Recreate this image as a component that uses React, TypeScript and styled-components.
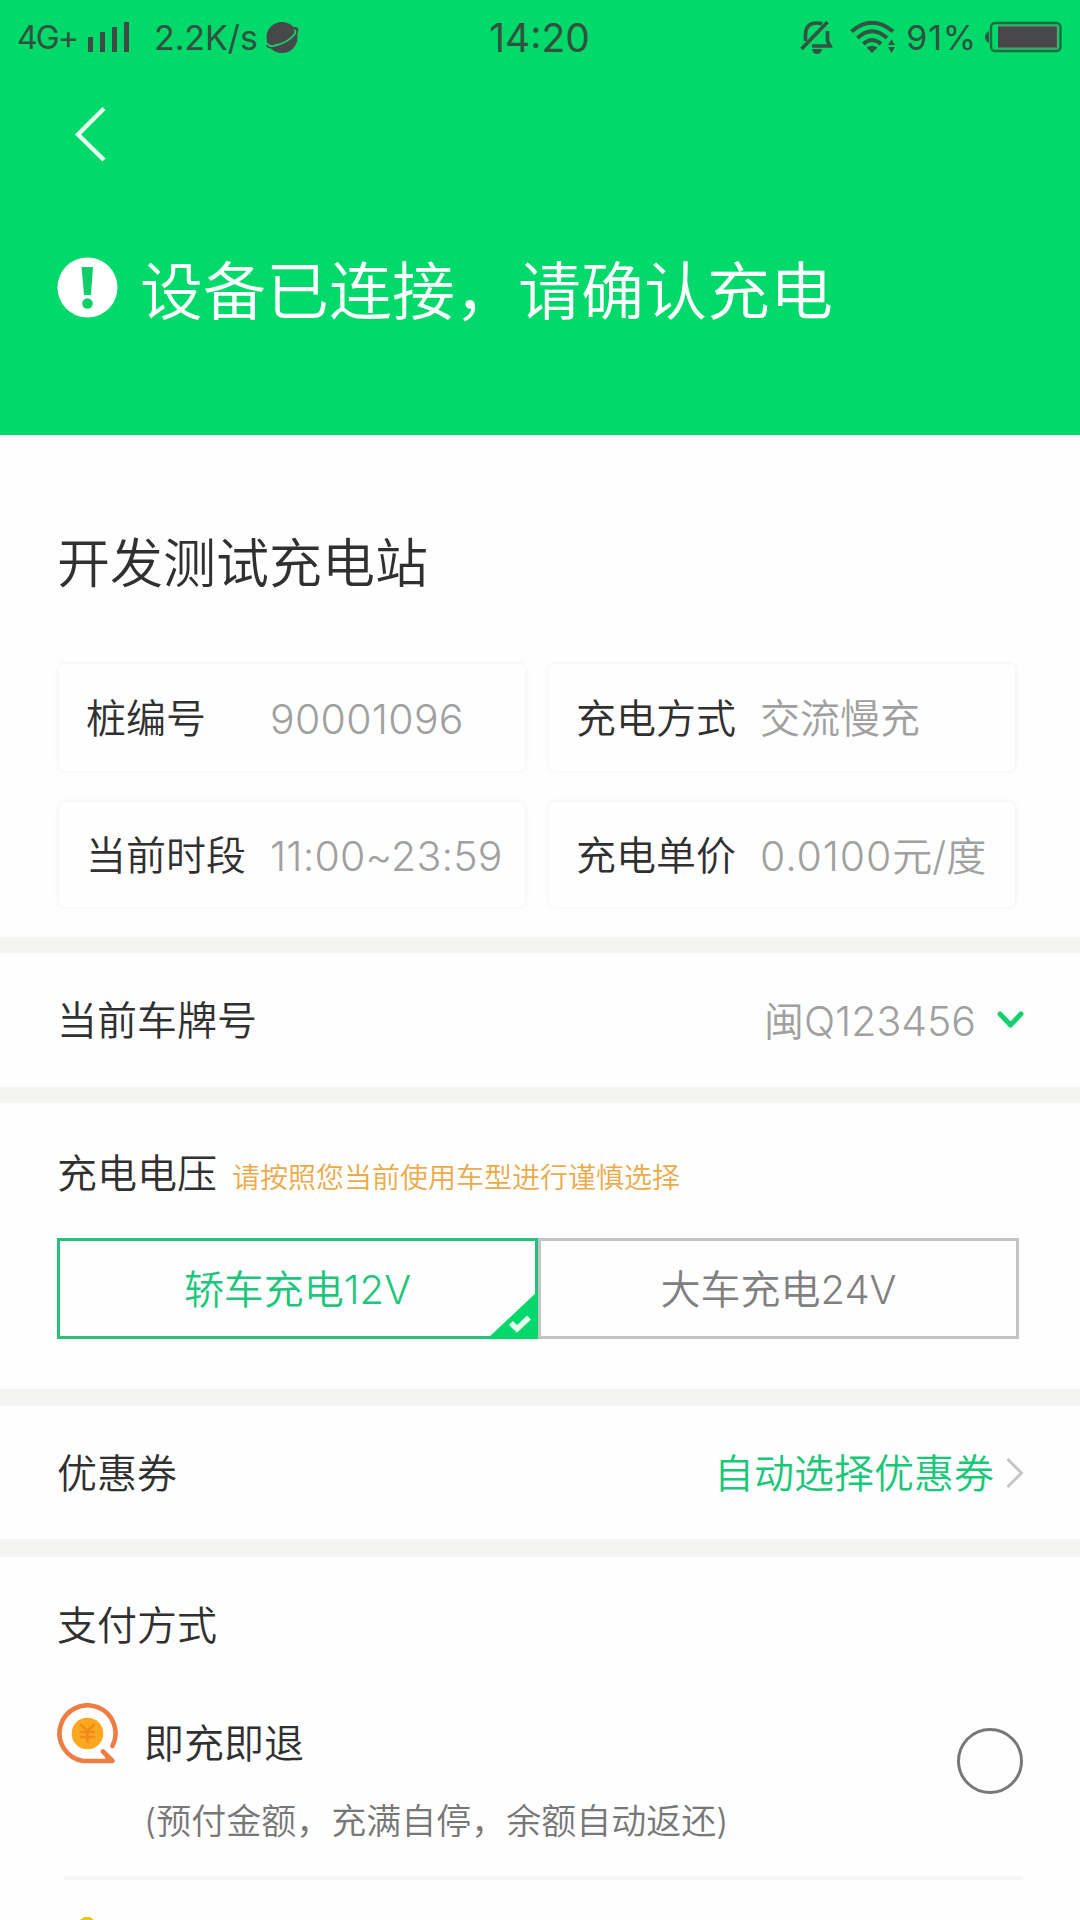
import React from "react";
import styled, { createGlobalStyle } from "styled-components";

const GlobalStyle = createGlobalStyle`
  * { box-sizing: border-box; }
  body {
    margin: 0;
    background: #fefefd;
    font-family: Inter, "Noto Sans CJK SC", sans-serif;
    font-weight: 350;
    color: #303030;
  }
`;

const Screen = styled.div`
  width: 1080px;
  height: 1920px;
  overflow: hidden;
  background: #fefefe;
  display: flex;
  flex-direction: column;
`;

const Header = styled.header`
  height: 435px;
  flex: none;
  background: #01d96a;
  display: flex;
  flex-direction: column;
`;

const StatusBar = styled.div`
  height: 74px;
  padding: 0 18px 0 17px;
  display: grid;
  grid-template-columns: 1fr auto 1fr;
  align-items: center;
  color: #32513f;
  font-weight: 400;
`;

const StatusGroup = styled.div<{ $end?: boolean }>`
  display: flex;
  align-items: center;
  justify-content: ${(p) => (p.$end ? "flex-end" : "flex-start")};
`;

const StatusText = styled.span<{ $size: number; $spacing?: number; $gap?: number }>`
  font-size: ${(p) => p.$size}px;
  letter-spacing: ${(p) => p.$spacing ?? 0}px;
  margin-right: ${(p) => p.$gap ?? 0}px;
  padding-top: 2px;
  line-height: 40px;
  white-space: nowrap;
`;

const Icon = styled.svg<{ $gap?: number }>`
  display: block;
  flex: none;
  margin-right: ${(p) => p.$gap ?? 0}px;
`;

const NavBar = styled.nav`
  height: 118px;
  padding: 32px 0 0 74px;
`;

const Banner = styled.div`
  height: 190px;
  padding-left: 57px;
  display: flex;
  align-items: center;
  gap: 22px;
`;

const BannerText = styled.h1`
  margin: 0;
  padding-top: 7px;
  font-size: 63px;
  line-height: 80px;
  font-weight: 350;
  color: #fff;
  white-space: nowrap;
`;

const Station = styled.section`
  height: 502px;
  flex: none;
  padding: 98px 0 0 59px;
`;

const StationName = styled.h2`
  margin: 0 0 69px -2px;
  font-size: 53px;
  line-height: 62px;
  font-weight: 350;
`;

const InfoGrid = styled.div`
  display: grid;
  grid-template-columns: 466px 466px;
  grid-template-rows: 107px 105px;
  column-gap: 24px;
  row-gap: 31px;
`;

const InfoCard = styled.div`
  display: flex;
  align-items: center;
  padding: 3px 0 0 27px;
  border-radius: 6px;
  box-shadow: 0 0 5px 1px #f3f3f3;
  background: #fefefe;
`;

const Label = styled.span`
  font-size: 40px;
  line-height: 50px;
  white-space: nowrap;
`;

const InfoLabel = styled(Label)`
  width: 184px;
`;

const Value = styled.span`
  font-size: 40px;
  line-height: 50px;
  color: #a0a0a0;
  white-space: nowrap;
`;

const Digits = styled.span<{ $spacing: number }>`
  font-size: 41px;
  font-weight: 300;
  letter-spacing: ${(p) => p.$spacing}px;
`;

const Divider = styled.div<{ $height: number }>`
  height: ${(p) => p.$height}px;
  flex: none;
  background: #f4f4f3;
`;

const Row = styled.section<{ $height: number }>`
  height: ${(p) => p.$height}px;
  flex: none;
  padding: 2px 56px 0 57px;
  display: flex;
  align-items: center;
`;

const RowValue = styled.div<{ $gap: number }>`
  margin-left: auto;
  display: flex;
  align-items: center;
  gap: ${(p) => p.$gap}px;
`;

const CouponText = styled(Label)`
  color: #18c878;
`;

const Voltage = styled.section`
  height: 286px;
  flex: none;
  padding: 46px 61px 0 57px;
`;

const VoltageTitle = styled.div`
  height: 50px;
  display: flex;
  align-items: baseline;
  gap: 15px;
`;

const Hint = styled.span`
  font-size: 28px;
  color: #ecaa48;
  white-space: nowrap;
`;

const Options = styled.div`
  margin-top: 39px;
  height: 101px;
  display: grid;
  grid-template-columns: 481px 481px;
`;

const Option = styled.div<{ $active?: boolean }>`
  position: relative;
  display: flex;
  align-items: center;
  justify-content: center;
  padding-top: 3px;
  font-size: 40px;
  line-height: 50px;
  color: ${(p) => (p.$active ? "#1cc77b" : "#808080")};
  border: 3px solid ${(p) => (p.$active ? "#28bf7b" : "#c3c5c4")};
`;

const Corner = styled.svg`
  position: absolute;
  right: -3px;
  bottom: -3px;
`;

const Payment = styled.section`
  padding: 44px 57px 0 57px;
  display: flex;
  flex-direction: column;
`;

const Method = styled.div`
  margin-top: 52px;
  height: 173px;
  display: flex;
  align-items: flex-start;
`;

const MethodText = styled.div`
  margin: 16px auto 0 26px;
  display: flex;
  flex-direction: column;
  gap: 27px;
`;

const Note = styled.span`
  font-size: 35px;
  line-height: 50px;
  color: #777;
  white-space: nowrap;
`;

const Radio = styled.div`
  width: 66px;
  height: 66px;
  margin-top: 25px;
  border: 3px solid #777;
  border-radius: 50%;
`;

const Line = styled.div`
  height: 4px;
  margin-left: 7px;
  background: #f6f6f5;
`;

const NextMethod = styled.div`
  padding: 37px 0 0 13px;
`;

const infos = [
  { label: "桩编号", digits: "90001096", spacing: 0.3 },
  { label: "充电方式", unit: "交流慢充" },
  { label: "当前时段", digits: "11:00~23:59", spacing: 0.2 },
  { label: "充电单价", digits: "0.0100", unit: "元/度", spacing: 0.9 },
];

const SignalIcon = () => (
  <Icon width="42" height="32" viewBox="0 0 42 32" fill="#3f4b44" $gap={24}>
    <rect x="0" y="16" width="5" height="15" />
    <rect x="12" y="11" width="5" height="20" />
    <rect x="24" y="6" width="5" height="25" />
    <rect x="36" y="1" width="5" height="30" />
  </Icon>
);

const PlanetIcon = () => (
  <Icon width="33" height="33" viewBox="0 0 33 33">
    <circle cx="16" cy="16.5" r="15.5" fill="#48484a" />
    <path d="M28 7 Q33 7 30 13 Q24 23 9 26 Q2 27 1 24" fill="none" stroke="#48484a" strokeWidth="2.5" />
    <path d="M28 9 Q31 10 28 14 Q21 22 9 24.5 Q3 26 2 23" fill="none" stroke="#14d66d" strokeWidth="1.8" />
  </Icon>
);

const MuteIcon = () => (
  <Icon width="34" height="35" viewBox="0 0 34 35" fill="none" stroke="#345340" strokeWidth="3.6" $gap={16}>
    <path d="M5.5 21 V14 Q6 3 17 3 Q20 3 22 4" />
    <path d="M27.5 11 V21 L30 26 H12" />
    <path d="M1.5 29 L27.5 2" />
    <path d="M12 29 H22 Q21 34 17 34 Q13 34 12 29 Z" fill="#345340" stroke="none" />
  </Icon>
);

const WifiIcon = () => (
  <Icon width="46" height="34" viewBox="0 0 46 34" fill="none" stroke="#345340" strokeWidth="4" $gap={10}>
    <path d="M1.5 11.5 Q22 -6 43 11.5" />
    <path d="M7.5 18 Q22 4.5 37 18" />
    <path d="M13.5 24 Q22 16 31 24" />
    <path d="M16.5 27.5 Q22 24 27.5 27.5 L22 33 Z" fill="#345340" stroke="none" />
    <path d="M41.5 19.5 L45 25 H38 Z M38 27 H45 L41.5 33 Z" fill="#345340" stroke="none" />
  </Icon>
);

const BatteryIcon = () => (
  <Icon width="77" height="32" viewBox="0 0 77 32">
    <path d="M4 10 V22 Q0 20 0 16 Q0 12 4 10 Z" fill="#345340" />
    <rect x="6" y="2" width="69.5" height="28" rx="4" fill="none" stroke="#16703c" strokeWidth="2.4" />
    <rect x="13" y="4.5" width="59.5" height="23" fill="#48484a" />
    <path d="M13 4.7 H72.5 V27.3 H13" fill="none" stroke="#5a9c72" strokeWidth="1.4" />
  </Icon>
);

const RefundIcon = () => (
  <Icon width="61" height="61" viewBox="0 0 61 61" fill="none" strokeLinecap="round" strokeLinejoin="round">
    <path d="M55.5 43 A28 28 0 1 0 26 58 H55.5 L46 48.5" stroke="#ee7d41" strokeWidth="4.6" />
    <path d="M47 50 L55 58 H49 Z" fill="#ee7d41" />
    <circle cx="30.5" cy="30.5" r="15.8" fill="#fca81e" />
    <path d="M24 22 L30.5 28 L37 22 M24 29 H37 M24 34 H37 M30.5 28 V39" stroke="#f08a1d" strokeWidth="2.6" />
  </Icon>
);

export default function App() {
  return (
    <Screen>
      <GlobalStyle />
      <Header>
        <StatusBar>
          <StatusGroup>
            <StatusText $size={32} $spacing={-1.9} $gap={11}>4G+</StatusText>
            <SignalIcon />
            <StatusText $size={34} $spacing={-0.1} $gap={8}>2.2K/s</StatusText>
            <PlanetIcon />
          </StatusGroup>
          <StatusText $size={39}>14:20</StatusText>
          <StatusGroup $end>
            <MuteIcon />
            <WifiIcon />
            <StatusText $size={34} $spacing={0.8} $gap={8}>91%</StatusText>
            <BatteryIcon />
          </StatusGroup>
        </StatusBar>
        <NavBar>
          <Icon width="32" height="56" viewBox="0 0 32 56" fill="none" stroke="#e9ffef" strokeWidth="4.4">
            <path d="M30 2.5 L4 28.5 L30 54" />
          </Icon>
        </NavBar>
        <Banner>
          <Icon width="61" height="61" viewBox="0 0 61 61">
            <circle cx="30.5" cy="30.5" r="30" fill="#fff" />
            <path d="M24.5 10 H36 L34 38 H27 Z" fill="#10cf6b" />
            <circle cx="30.5" cy="46.5" r="5.3" fill="#10cf6b" />
          </Icon>
          <BannerText>设备已连接，请确认充电</BannerText>
        </Banner>
      </Header>

      <Station>
        <StationName>开发测试充电站</StationName>
        <InfoGrid>
          {infos.map((info) => (
            <InfoCard key={info.label}>
              <InfoLabel>{info.label}</InfoLabel>
              <Value>
                {info.digits && <Digits $spacing={info.spacing ?? 0}>{info.digits}</Digits>}
                {info.unit}
              </Value>
            </InfoCard>
          ))}
        </InfoGrid>
      </Station>
      <Divider $height={16} />

      <Row $height={134}>
        <Label>当前车牌号</Label>
        <RowValue $gap={21}>
          <Value>闽<Digits $spacing={0}>Q123456</Digits></Value>
          <Icon width="27" height="20" viewBox="0 0 27 20" fill="none" stroke="#12d06e" strokeWidth="5" strokeLinecap="round" strokeLinejoin="round">
            <path d="M3 3 L13.5 14 L24 3" />
          </Icon>
        </RowValue>
      </Row>
      <Divider $height={16} />

      <Voltage>
        <VoltageTitle>
          <Label>充电电压</Label>
          <Hint>请按照您当前使用车型进行谨慎选择</Hint>
        </VoltageTitle>
        <Options>
          <Option $active>
            轿车充电12V
            <Corner width="51" height="48" viewBox="0 0 51 48">
              <path d="M51 0 V48 H0 Z" fill="#04d76c" />
              <path d="M24 32 L30 38 L42 26.5" fill="none" stroke="#e8fff0" strokeWidth="5.5" />
            </Corner>
          </Option>
          <Option>大车充电24V</Option>
        </Options>
      </Voltage>
      <Divider $height={17} />

      <Row $height={133}>
        <Label>优惠券</Label>
        <RowValue $gap={12}>
          <CouponText>自动选择优惠券</CouponText>
          <Icon width="18" height="34" viewBox="0 0 18 34" fill="none" stroke="#c4c4c4" strokeWidth="2.8">
            <path d="M1.5 2 L15.5 16 L1.5 30" />
          </Icon>
        </RowValue>
      </Row>
      <Divider $height={18} />

      <Payment>
        <Label>支付方式</Label>
        <Method>
          <RefundIcon />
          <MethodText>
            <Label>即充即退</Label>
            <Note>(预付金额，充满自停，余额自动返还)</Note>
          </MethodText>
          <Radio />
        </Method>
        <Line />
        <NextMethod>
          <Icon width="34" height="30" viewBox="0 0 34 30">
            <path d="M14 0 H20 L27 5 V20 H7 V5 Z" fill="#e8c71d" />
          </Icon>
        </NextMethod>
      </Payment>
    </Screen>
  );
}
